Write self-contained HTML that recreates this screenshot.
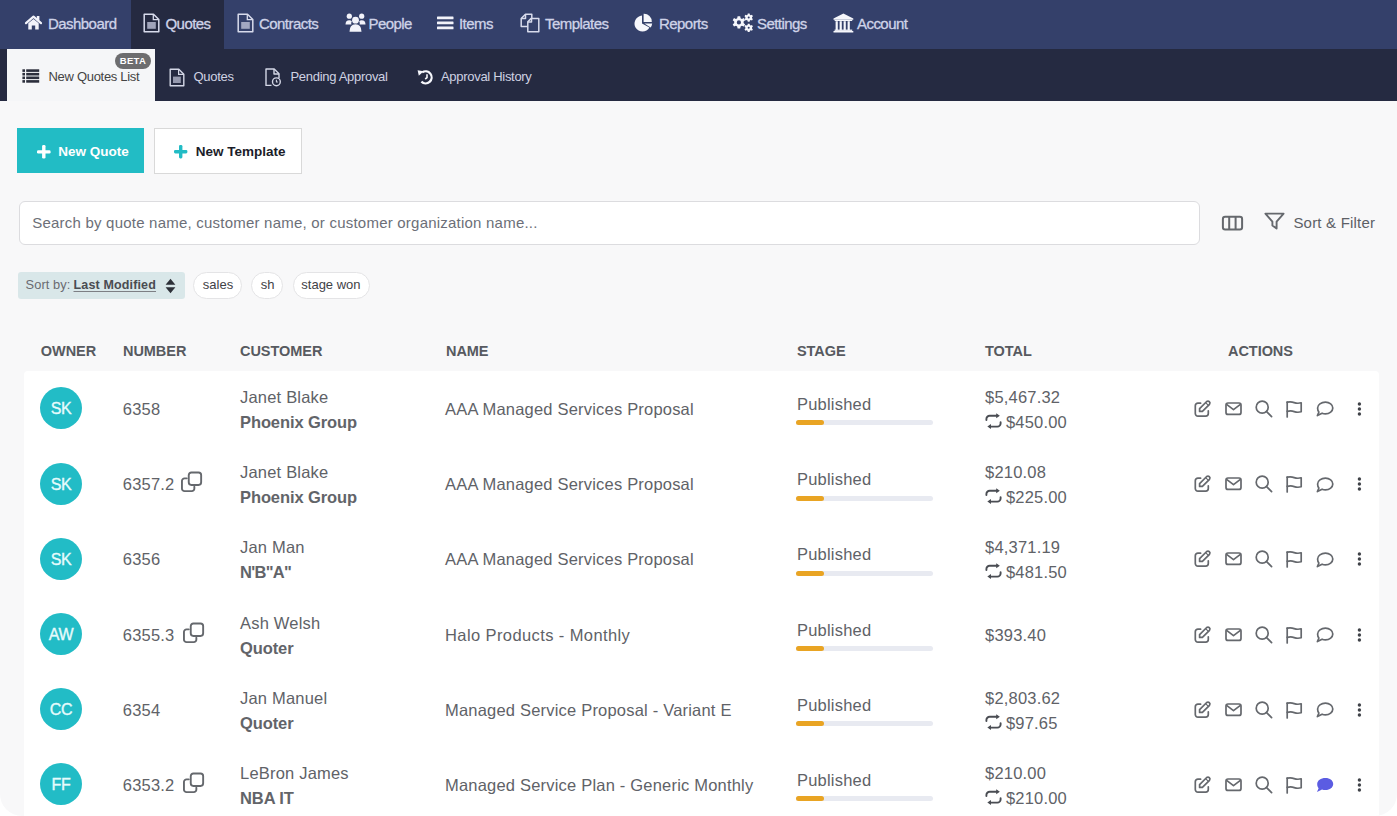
<!DOCTYPE html>
<html><head><meta charset="utf-8">
<style>
*{box-sizing:border-box;margin:0;padding:0}
html,body{width:1397px;height:816px;overflow:hidden;background:#fff}
body{font-family:"Liberation Sans",sans-serif;position:relative}
#page{position:absolute;left:0;top:0;width:1397px;height:816px;background:#f8f8f9;border-radius:0 0 22px 22px;overflow:hidden}
.a{position:absolute;white-space:nowrap}
#topnav{position:absolute;left:0;top:0;width:1397px;height:49px;background:#34406a}
#subnav{position:absolute;left:0;top:49px;width:1397px;height:52px;background:#252a41}
.tn{position:absolute;top:15.9px;height:16px;line-height:16px;font-size:15px;color:#cfd3e8;letter-spacing:-0.55px;-webkit-text-stroke:0.3px #cfd3e8}
.ti{position:absolute;fill:#e6e8f4}
.sn{position:absolute;top:68.5px;height:16px;line-height:16px;font-size:13px;color:#cfd2e2;letter-spacing:-0.3px}
svg{position:absolute;overflow:visible}

.btxt{top:143.5px;height:16px;line-height:16px;font-size:13.5px;font-weight:bold}
.chip{top:277px;height:16px;line-height:16px;font-size:13px}
.th{top:342.7px;height:16px;line-height:16px;font-size:14.5px;font-weight:bold;color:#575a60;letter-spacing:-0.05px}
.td{height:20px;line-height:20px;font-size:16.5px;color:#606267;letter-spacing:0.2px;margin-top:0.5px}
.td.b{font-weight:bold;color:#626469;letter-spacing:-0.1px}
.av{width:42px;height:42px;border-radius:50%;background:#22bcc6;color:#e6fbfc;font-size:16px;line-height:43.5px;text-align:center;letter-spacing:-0.3px;-webkit-text-stroke:0.35px #e6fbfc}
</style></head><body>
<div id="page">
<div id="topnav"></div>
<div class="a" style="left:131px;top:0;width:93px;height:49px;background:#252a41"></div>
<div id="subnav"></div>
<div class="a" style="left:7px;top:49px;width:147.5px;height:52px;background:#f5f6f8"></div>

<!-- top nav items -->
<span class="tn" style="left:48px">Dashboard</span>
<span class="tn" style="left:165.5px">Quotes</span>
<span class="tn" style="left:259px">Contracts</span>
<span class="tn" style="left:368.5px">People</span>
<span class="tn" style="left:459px">Items</span>
<span class="tn" style="left:545px">Templates</span>
<span class="tn" style="left:659px">Reports</span>
<span class="tn" style="left:757px">Settings</span>
<span class="tn" style="left:857px">Account</span>

<!-- top nav icons -->
<svg style="left:25px;top:15px" width="17" height="15" viewBox="0 0 17 15"><path d="M1 8.2L8.5 1.6L16 8.2" fill="none" stroke="#f2f3fa" stroke-width="2.2" stroke-linecap="round" stroke-linejoin="round"/><rect x="11.8" y="1" width="2.6" height="4.5" fill="#f2f3fa"/><path d="M3.3 8.3L8.5 3.9L13.7 8.3V14.6H10.2V10.4H6.8V14.6H3.3Z" fill="#f2f3fa"/></svg>
<svg style="left:143px;top:13px" width="17" height="20" viewBox="0 0 17 20"><path d="M1.2 1.2H10.5L15.8 6.5V18.8H1.2Z" fill="none" stroke="#d8dbec" stroke-width="1.5" stroke-linejoin="round"/><path d="M10.3 1.2V6.7H15.8" fill="none" stroke="#d8dbec" stroke-width="1.3"/><rect x="4.2" y="9" width="8.6" height="6.8" fill="#b6bad0" opacity=".85"/></svg>
<svg style="left:236.5px;top:13px" width="17" height="20" viewBox="0 0 17 20"><path d="M1.2 1.2H10.5L15.8 6.5V18.8H1.2Z" fill="none" stroke="#d8dbec" stroke-width="1.5" stroke-linejoin="round"/><path d="M10.3 1.2V6.7H15.8" fill="none" stroke="#d8dbec" stroke-width="1.3"/><rect x="4.2" y="9" width="8.6" height="6.8" fill="#b6bad0" opacity=".85"/></svg>
<svg style="left:344.5px;top:13px" width="21" height="19" viewBox="0 0 21 19"><g fill="#f2f3fa"><circle cx="4.3" cy="3.2" r="2.6"/><circle cx="16.7" cy="3.2" r="2.6"/><circle cx="10.5" cy="7.2" r="3.4"/><path d="M0.5 11.5Q0.5 7.2 4.3 7.2Q6 7.2 6.8 8.2Q5.8 10 6.4 11.5Z"/><path d="M20.5 11.5Q20.5 7.2 16.7 7.2Q15 7.2 14.2 8.2Q15.2 10 14.6 11.5Z"/><path d="M4.5 18.8Q4.5 11.3 10.5 11.3Q16.5 11.3 16.5 18.8Z"/></g></svg>
<svg style="left:436.5px;top:16px" width="17" height="14" viewBox="0 0 17 14"><g fill="#f2f3fa"><rect x="0" y="0.5" width="16.5" height="2.8" rx=".6"/><rect x="0" y="5.5" width="16.5" height="2.8" rx=".6"/><rect x="0" y="10.5" width="16.5" height="2.8" rx=".6"/></g></svg>
<svg style="left:520px;top:13px" width="21" height="20" viewBox="0 0 21 20"><g fill="none" stroke="#d8dbec" stroke-width="1.5" stroke-linejoin="round"><path d="M7.8 13.5H1.2V5.5L5.5 1.2H11.8V5.2"/><path d="M1.2 5.5H5.5V1.2"/><path d="M7.8 8.8L11.2 5.4H18.8V18.8H7.8Z"/><path d="M7.8 9H11.5V5.4"/></g></svg>
<svg style="left:634px;top:13px" width="19" height="19" viewBox="0 0 19 19"><g fill="#f6f7fc"><path d="M8 2.6A8 8 0 1 0 15.4 14.6L8 10.4Z"/><path d="M9.6 0.8A7.8 7.8 0 0 1 17.8 9H9.6Z"/><path d="M10.4 10.6H18.2A7.8 7.8 0 0 1 16.6 14.6Z"/></g></svg>
<svg style="left:731.5px;top:13px" width="22" height="20" viewBox="0 0 22 20"><g fill="#f6f7fc"><path fill-rule="evenodd" d="M5.6 3.2h2.6l.4 2 1.3.7 1.9-.8 1.3 2.2-1.5 1.3v1.5l1.5 1.3-1.3 2.2-1.9-.8-1.3.7-.4 2H5.6l-.4-2-1.3-.7-1.9.8L.7 11.4l1.5-1.3V8.6L.7 7.3 2 5.1l1.9.8 1.3-.7zM6.9 7.3a2.1 2.1 0 1 0 0 4.2a2.1 2.1 0 1 0 0-4.2z"/><path fill-rule="evenodd" d="M15.8 0.6h1.8l.3 1.2.9.5 1.2-.5.9 1.5-.9.9v1l.9.9-.9 1.5-1.2-.5-.9.5-.3 1.2h-1.8l-.3-1.2-.9-.5-1.2.5-.9-1.5.9-.9v-1l-.9-.9.9-1.5 1.2.5.9-.5zM16.7 3.6a1 1 0 1 0 0 2a1 1 0 1 0 0-2z"/><path fill-rule="evenodd" d="M15.8 10.8h1.8l.3 1.2.9.5 1.2-.5.9 1.5-.9.9v1l.9.9-.9 1.5-1.2-.5-.9.5-.3 1.2h-1.8l-.3-1.2-.9-.5-1.2.5-.9-1.5.9-.9v-1l-.9-.9.9-1.5 1.2.5.9-.5zM16.7 13.8a1 1 0 1 0 0 2a1 1 0 1 0 0-2z"/></g></svg>
<svg style="left:833px;top:13px" width="21" height="20" viewBox="0 0 21 20"><g fill="#f6f7fc"><path d="M10.4 0.6L20.3 5.4V6.8H0.5V5.4Z"/><rect x="1.6" y="6.9" width="17.6" height="1.1"/><rect x="2.6" y="8.2" width="2.2" height="9"/><rect x="6.6" y="8.2" width="2.2" height="9"/><rect x="10.6" y="8.2" width="2.2" height="9"/><rect x="14.6" y="8.2" width="2.2" height="9"/><rect x="1.6" y="16.6" width="17.6" height="1.3"/><rect x="0.5" y="18" width="19.8" height="1.5"/></g></svg>

<!-- sub nav icons -->
<svg style="left:22px;top:69px" width="18" height="14" viewBox="0 0 18 14"><g fill="#2b2e3b"><rect x="0.4" y="0.3" width="2.6" height="2.6"/><rect x="4.2" y="0.3" width="13" height="2.6"/><rect x="0.4" y="3.9" width="2.6" height="2.6"/><rect x="4.2" y="3.9" width="13" height="2.6"/><rect x="0.4" y="7.5" width="2.6" height="2.6"/><rect x="4.2" y="7.5" width="13" height="2.6"/><rect x="0.4" y="11.1" width="2.6" height="2.6"/><rect x="4.2" y="11.1" width="13" height="2.6"/></g></svg>
<svg style="left:169px;top:67.5px" width="17" height="19" viewBox="0 0 17 19"><path d="M1.2 1.2H9.8L14.8 6.2V17.8H1.2Z" fill="none" stroke="#d4d7e6" stroke-width="1.4" stroke-linejoin="round"/><path d="M9.6 1.2V6.4H14.8" fill="none" stroke="#d4d7e6" stroke-width="1.2"/><rect x="4" y="8.6" width="7.8" height="6.4" fill="#a9adc2" opacity=".85"/></svg>
<svg style="left:264.5px;top:67.5px" width="18" height="19" viewBox="0 0 18 19"><g fill="none" stroke="#d4d7e6" stroke-width="1.4" stroke-linejoin="round"><path d="M6.5 17.4H1V1H9.2L14 5.8V10"/><path d="M9 1V6H14"/><circle cx="11.4" cy="13.8" r="3.9"/><path d="M11.4 11.8V14H12.8" stroke-width="1.1"/></g></svg>
<svg style="left:416.5px;top:69px" width="17" height="16" viewBox="0 0 17 16"><g fill="none" stroke="#f6f7fc" stroke-width="2.3"><path d="M5.2 3.4A6 6 0 1 1 4.4 12.6"/><path d="M10 5.2V8.6L8.2 10" stroke-width="1.6"/></g><path d="M0.6 1.2L6.6 2.2L1.8 6.8Z" fill="#f6f7fc"/></svg>

<!-- content -->
<div class="a" style="left:17px;top:128px;width:127px;height:45px;background:#22bcc5"></div>
<svg style="left:37px;top:144.8px" width="14" height="14" viewBox="0 0 14 14" ><g fill="#fff"><rect x="0" y="5.2" width="13.6" height="3.4" rx="1.3"/><rect x="5.1" y="0" width="3.4" height="13.6" rx="1.3"/></g></svg>
<span class="a btxt" style="left:58.3px;color:#fff">New Quote</span>
<div class="a" style="left:154px;top:127.5px;width:148px;height:46px;background:#fff;border:1px solid #d9d9d9"></div>
<svg style="left:174px;top:145px" width="14" height="14" viewBox="0 0 14 14" ><g fill="#22bcc5"><rect x="0" y="5" width="13.4" height="3.4" rx="1.3"/><rect x="5" y="0" width="3.4" height="13.4" rx="1.3"/></g></svg>
<span class="a btxt" style="left:195.7px;color:#1b1d29">New Template</span>
<div class="a" style="left:18.5px;top:201px;width:1181px;height:44px;background:#fff;border:1px solid #dcdcdf;border-radius:6px"></div>
<span class="a" style="left:32.2px;top:214px;height:18px;line-height:18px;font-size:15px;color:#6c6f78;letter-spacing:0.22px">Search by quote name, customer name, or customer organization name...</span>
<svg style="left:1221px;top:215px" width="23" height="16" viewBox="0 0 23 16" ><g fill="none" stroke="#65686d" stroke-width="2"><rect x="1.9" y="1.7" width="19.2" height="12.8" rx="2.2"/><path d="M8.2 1.7V14.5M14.6 1.7V14.5"/></g></svg>
<svg style="left:1264px;top:212px" width="21" height="18" viewBox="0 0 21 18" ><path d="M1.4 1.6H19.6L12.6 9.6V16.6L8.4 13.6V9.6Z" fill="none" stroke="#65686d" stroke-width="1.9" stroke-linejoin="round"/></svg>
<span class="a" style="left:1293.4px;top:213.5px;height:18px;line-height:18px;font-size:15px;color:#5d6066;letter-spacing:0.2px">Sort &amp; Filter</span>
<div class="a" style="left:17.5px;top:272px;width:167px;height:27px;background:#d9e7e9;border-radius:3px"></div>
<span class="a chip" style="left:25.6px;color:#696b71;font-size:12.8px;letter-spacing:0.1px">Sort by:</span>
<span class="a chip" style="left:73.5px;color:#4a4c52;font-size:12.5px;font-weight:bold;letter-spacing:0.15px;text-decoration:underline #7d7f84;text-decoration-thickness:1.2px;text-underline-offset:1.5px">Last Modified</span>
<svg style="left:164.5px;top:277.5px" width="11" height="16" viewBox="0 0 11 16" ><g fill="#2d3038"><path d="M5.5 0.8L10.4 6.8H0.6Z"/><path d="M5.5 15.2L10.4 9.2H0.6Z"/></g></svg>
<div class="a" style="left:193.3px;top:272px;width:48.4px;height:27px;background:#fff;border:1px solid #e4e4e6;border-radius:14px"></div>
<span class="a chip" style="left:202.8px;color:#3f4247">sales</span>
<div class="a" style="left:250.5px;top:272px;width:32.3px;height:27px;background:#fff;border:1px solid #e4e4e6;border-radius:14px"></div>
<span class="a chip" style="left:260.7px;color:#3f4247">sh</span>
<div class="a" style="left:292.8px;top:272px;width:77.2px;height:27px;background:#fff;border:1px solid #e4e4e6;border-radius:14px"></div>
<span class="a chip" style="left:301.3px;color:#3f4247">stage won</span>
<span class="a th" style="left:40.8px">OWNER</span>
<span class="a th" style="left:123px">NUMBER</span>
<span class="a th" style="left:240px">CUSTOMER</span>
<span class="a th" style="left:446px">NAME</span>
<span class="a th" style="left:797px">STAGE</span>
<span class="a th" style="left:985px">TOTAL</span>
<span class="a th" style="left:1228px">ACTIONS</span>
<div class="a" style="left:23.5px;top:371px;width:1355px;height:520px;background:#fff;border-radius:4px"></div>
<div class="a av" style="left:40px;top:387.4px">SK</div>
<span class="a td" style="left:122.8px;top:398.4px">6358</span>
<span class="a td" style="left:240px;top:386.4px">Janet Blake</span>
<span class="a td b" style="left:240px;top:411.4px">Phoenix Group</span>
<span class="a td" style="left:445px;top:398.4px">AAA Managed Services Proposal</span>
<span class="a td" style="left:797px;top:393.4px">Published</span>
<div class="a" style="left:796px;top:420.4px;width:137px;height:5px;border-radius:3px;background:#e8eaf1"></div>
<div class="a" style="left:796px;top:420.4px;width:28px;height:5px;border-radius:3px;background:#e9a423"></div>
<span class="a td" style="left:985px;top:386.4px">$5,467.32</span>
<svg style="left:984.5px;top:412.9px" width="17" height="17" viewBox="0 0 17 17" ><g fill="none" stroke="#4a4d53" stroke-width="1.9" stroke-linecap="round"><path d="M1.4 7V6A3.2 3.2 0 0 1 4.6 2.8H12"/><path d="M15.6 9.2V10.4A3.2 3.2 0 0 1 12.4 13.6H5"/></g><g fill="#4a4d53"><path d="M11.2 0.3L14.9 2.8L11.2 5.3Z"/><path d="M6 11.1L2.3 13.6L6 16.1Z"/></g></svg>
<span class="a td" style="left:1005.9px;top:411.4px">$450.00</span>
<svg style="left:1194px;top:399.9px" width="18" height="18" viewBox="0 0 18 18" ><g fill="none" stroke="#65686d" stroke-width="1.7" stroke-linecap="round" stroke-linejoin="round"><path d="M6.6 3.2H3.9A2.6 2.6 0 0 0 1.3 5.8V13.6A2.6 2.6 0 0 0 3.9 16.2H11.7A2.6 2.6 0 0 0 14.3 13.6V10.8"/><path d="M15.5 4.3A2 2 0 0 0 12.7 1.5L5.6 8.6V11.4H8.4Z"/><path d="M11.6 2.6L14.4 5.4" stroke-width="1.2"/></g></svg>
<svg style="left:1224.5px;top:401.9px" width="18" height="14" viewBox="0 0 18 14" ><g fill="none" stroke="#65686d" stroke-width="1.7" stroke-linejoin="round"><rect x="1" y="1" width="15" height="11.4" rx="2"/><path d="M1.6 2.4L8.5 7.6L15.4 2.4"/></g></svg>
<svg style="left:1255px;top:399.9px" width="18" height="18" viewBox="0 0 18 18" ><g fill="none" stroke="#65686d" stroke-width="1.7" stroke-linecap="round"><circle cx="7.2" cy="7.2" r="6"/><path d="M11.6 11.6L16.6 16.6"/></g></svg>
<svg style="left:1285.5px;top:400.9px" width="17" height="17" viewBox="0 0 17 17" ><g fill="none" stroke="#65686d" stroke-width="1.7" stroke-linecap="round" stroke-linejoin="round"><path d="M1.2 16V1.2"/><path d="M1.2 1.2Q5 0.4 8.2 1.6Q11.6 2.8 15.2 1.8V10.8Q11.6 11.8 8.2 10.6Q5 9.4 1.2 10.4"/></g></svg>
<svg style="left:1315.5px;top:401.4px" width="18" height="16" viewBox="0 0 18 16" ><path d="M9.4 1.2C13.6 1.2 16.8 3.8 16.8 7C16.8 10.2 13.6 12.8 9.4 12.8C8.2 12.8 7.1 12.6 6.1 12.2L1.4 14.6L2.9 11C2 10 1.6 8.6 1.6 7C1.6 3.8 5.2 1.2 9.4 1.2Z" fill="none" stroke="#65686d" stroke-width="1.7" stroke-linejoin="round"/></svg>
<svg style="left:1356.5px;top:401.9px" width="5" height="14" viewBox="0 0 5 14" ><g fill="#3f4248"><circle cx="2.4" cy="2" r="1.7"/><circle cx="2.4" cy="7" r="1.7"/><circle cx="2.4" cy="12" r="1.7"/></g></svg>
<div class="a av" style="left:40px;top:462.6px">SK</div>
<span class="a td" style="left:122.8px;top:473.6px">6357.2</span>
<svg style="left:181.2px;top:471.2px" width="22" height="22" viewBox="0 0 22 22" ><g fill="none" stroke="#65686d" stroke-width="1.9" stroke-linecap="round"><rect x="7.75" y="1.45" width="12.4" height="12.5" rx="2.6"/><path d="M5.8 7.35H3.6A2.6 2.6 0 0 0 0.95 10V17.5A2.6 2.6 0 0 0 3.6 20.15H10.7A2.6 2.6 0 0 0 13.35 17.5V15.8"/></g></svg>
<span class="a td" style="left:240px;top:461.6px">Janet Blake</span>
<span class="a td b" style="left:240px;top:486.6px">Phoenix Group</span>
<span class="a td" style="left:445px;top:473.6px">AAA Managed Services Proposal</span>
<span class="a td" style="left:797px;top:468.6px">Published</span>
<div class="a" style="left:796px;top:495.6px;width:137px;height:5px;border-radius:3px;background:#e8eaf1"></div>
<div class="a" style="left:796px;top:495.6px;width:28px;height:5px;border-radius:3px;background:#e9a423"></div>
<span class="a td" style="left:985px;top:461.6px">$210.08</span>
<svg style="left:984.5px;top:488.1px" width="17" height="17" viewBox="0 0 17 17" ><g fill="none" stroke="#4a4d53" stroke-width="1.9" stroke-linecap="round"><path d="M1.4 7V6A3.2 3.2 0 0 1 4.6 2.8H12"/><path d="M15.6 9.2V10.4A3.2 3.2 0 0 1 12.4 13.6H5"/></g><g fill="#4a4d53"><path d="M11.2 0.3L14.9 2.8L11.2 5.3Z"/><path d="M6 11.1L2.3 13.6L6 16.1Z"/></g></svg>
<span class="a td" style="left:1005.9px;top:486.6px">$225.00</span>
<svg style="left:1194px;top:475.1px" width="18" height="18" viewBox="0 0 18 18" ><g fill="none" stroke="#65686d" stroke-width="1.7" stroke-linecap="round" stroke-linejoin="round"><path d="M6.6 3.2H3.9A2.6 2.6 0 0 0 1.3 5.8V13.6A2.6 2.6 0 0 0 3.9 16.2H11.7A2.6 2.6 0 0 0 14.3 13.6V10.8"/><path d="M15.5 4.3A2 2 0 0 0 12.7 1.5L5.6 8.6V11.4H8.4Z"/><path d="M11.6 2.6L14.4 5.4" stroke-width="1.2"/></g></svg>
<svg style="left:1224.5px;top:477.1px" width="18" height="14" viewBox="0 0 18 14" ><g fill="none" stroke="#65686d" stroke-width="1.7" stroke-linejoin="round"><rect x="1" y="1" width="15" height="11.4" rx="2"/><path d="M1.6 2.4L8.5 7.6L15.4 2.4"/></g></svg>
<svg style="left:1255px;top:475.1px" width="18" height="18" viewBox="0 0 18 18" ><g fill="none" stroke="#65686d" stroke-width="1.7" stroke-linecap="round"><circle cx="7.2" cy="7.2" r="6"/><path d="M11.6 11.6L16.6 16.6"/></g></svg>
<svg style="left:1285.5px;top:476.1px" width="17" height="17" viewBox="0 0 17 17" ><g fill="none" stroke="#65686d" stroke-width="1.7" stroke-linecap="round" stroke-linejoin="round"><path d="M1.2 16V1.2"/><path d="M1.2 1.2Q5 0.4 8.2 1.6Q11.6 2.8 15.2 1.8V10.8Q11.6 11.8 8.2 10.6Q5 9.4 1.2 10.4"/></g></svg>
<svg style="left:1315.5px;top:476.6px" width="18" height="16" viewBox="0 0 18 16" ><path d="M9.4 1.2C13.6 1.2 16.8 3.8 16.8 7C16.8 10.2 13.6 12.8 9.4 12.8C8.2 12.8 7.1 12.6 6.1 12.2L1.4 14.6L2.9 11C2 10 1.6 8.6 1.6 7C1.6 3.8 5.2 1.2 9.4 1.2Z" fill="none" stroke="#65686d" stroke-width="1.7" stroke-linejoin="round"/></svg>
<svg style="left:1356.5px;top:477.1px" width="5" height="14" viewBox="0 0 5 14" ><g fill="#3f4248"><circle cx="2.4" cy="2" r="1.7"/><circle cx="2.4" cy="7" r="1.7"/><circle cx="2.4" cy="12" r="1.7"/></g></svg>
<div class="a av" style="left:40px;top:537.8px">SK</div>
<span class="a td" style="left:122.8px;top:548.8px">6356</span>
<span class="a td" style="left:240px;top:536.8px">Jan Man</span>
<span class="a td b" style="left:240px;top:561.8px;letter-spacing:-0.7px">N&#x27;B&quot;A&quot;</span>
<span class="a td" style="left:445px;top:548.8px">AAA Managed Services Proposal</span>
<span class="a td" style="left:797px;top:543.8px">Published</span>
<div class="a" style="left:796px;top:570.8px;width:137px;height:5px;border-radius:3px;background:#e8eaf1"></div>
<div class="a" style="left:796px;top:570.8px;width:28px;height:5px;border-radius:3px;background:#e9a423"></div>
<span class="a td" style="left:985px;top:536.8px">$4,371.19</span>
<svg style="left:984.5px;top:563.3px" width="17" height="17" viewBox="0 0 17 17" ><g fill="none" stroke="#4a4d53" stroke-width="1.9" stroke-linecap="round"><path d="M1.4 7V6A3.2 3.2 0 0 1 4.6 2.8H12"/><path d="M15.6 9.2V10.4A3.2 3.2 0 0 1 12.4 13.6H5"/></g><g fill="#4a4d53"><path d="M11.2 0.3L14.9 2.8L11.2 5.3Z"/><path d="M6 11.1L2.3 13.6L6 16.1Z"/></g></svg>
<span class="a td" style="left:1005.9px;top:561.8px">$481.50</span>
<svg style="left:1194px;top:550.3px" width="18" height="18" viewBox="0 0 18 18" ><g fill="none" stroke="#65686d" stroke-width="1.7" stroke-linecap="round" stroke-linejoin="round"><path d="M6.6 3.2H3.9A2.6 2.6 0 0 0 1.3 5.8V13.6A2.6 2.6 0 0 0 3.9 16.2H11.7A2.6 2.6 0 0 0 14.3 13.6V10.8"/><path d="M15.5 4.3A2 2 0 0 0 12.7 1.5L5.6 8.6V11.4H8.4Z"/><path d="M11.6 2.6L14.4 5.4" stroke-width="1.2"/></g></svg>
<svg style="left:1224.5px;top:552.3px" width="18" height="14" viewBox="0 0 18 14" ><g fill="none" stroke="#65686d" stroke-width="1.7" stroke-linejoin="round"><rect x="1" y="1" width="15" height="11.4" rx="2"/><path d="M1.6 2.4L8.5 7.6L15.4 2.4"/></g></svg>
<svg style="left:1255px;top:550.3px" width="18" height="18" viewBox="0 0 18 18" ><g fill="none" stroke="#65686d" stroke-width="1.7" stroke-linecap="round"><circle cx="7.2" cy="7.2" r="6"/><path d="M11.6 11.6L16.6 16.6"/></g></svg>
<svg style="left:1285.5px;top:551.3px" width="17" height="17" viewBox="0 0 17 17" ><g fill="none" stroke="#65686d" stroke-width="1.7" stroke-linecap="round" stroke-linejoin="round"><path d="M1.2 16V1.2"/><path d="M1.2 1.2Q5 0.4 8.2 1.6Q11.6 2.8 15.2 1.8V10.8Q11.6 11.8 8.2 10.6Q5 9.4 1.2 10.4"/></g></svg>
<svg style="left:1315.5px;top:551.8px" width="18" height="16" viewBox="0 0 18 16" ><path d="M9.4 1.2C13.6 1.2 16.8 3.8 16.8 7C16.8 10.2 13.6 12.8 9.4 12.8C8.2 12.8 7.1 12.6 6.1 12.2L1.4 14.6L2.9 11C2 10 1.6 8.6 1.6 7C1.6 3.8 5.2 1.2 9.4 1.2Z" fill="none" stroke="#65686d" stroke-width="1.7" stroke-linejoin="round"/></svg>
<svg style="left:1356.5px;top:552.3px" width="5" height="14" viewBox="0 0 5 14" ><g fill="#3f4248"><circle cx="2.4" cy="2" r="1.7"/><circle cx="2.4" cy="7" r="1.7"/><circle cx="2.4" cy="12" r="1.7"/></g></svg>
<div class="a av" style="left:40px;top:613.0px">AW</div>
<span class="a td" style="left:122.8px;top:624.0px">6355.3</span>
<svg style="left:183.4px;top:621.6px" width="22" height="22" viewBox="0 0 22 22" ><g fill="none" stroke="#65686d" stroke-width="1.9" stroke-linecap="round"><rect x="7.75" y="1.45" width="12.4" height="12.5" rx="2.6"/><path d="M5.8 7.35H3.6A2.6 2.6 0 0 0 0.95 10V17.5A2.6 2.6 0 0 0 3.6 20.15H10.7A2.6 2.6 0 0 0 13.35 17.5V15.8"/></g></svg>
<span class="a td" style="left:240px;top:612.0px">Ash Welsh</span>
<span class="a td b" style="left:240px;top:637.0px">Quoter</span>
<span class="a td" style="left:445px;top:624.0px;letter-spacing:0.4px">Halo Products - Monthly</span>
<span class="a td" style="left:797px;top:619.0px">Published</span>
<div class="a" style="left:796px;top:646.0px;width:137px;height:5px;border-radius:3px;background:#e8eaf1"></div>
<div class="a" style="left:796px;top:646.0px;width:28px;height:5px;border-radius:3px;background:#e9a423"></div>
<span class="a td" style="left:985px;top:624.0px">$393.40</span>
<svg style="left:1194px;top:625.5px" width="18" height="18" viewBox="0 0 18 18" ><g fill="none" stroke="#65686d" stroke-width="1.7" stroke-linecap="round" stroke-linejoin="round"><path d="M6.6 3.2H3.9A2.6 2.6 0 0 0 1.3 5.8V13.6A2.6 2.6 0 0 0 3.9 16.2H11.7A2.6 2.6 0 0 0 14.3 13.6V10.8"/><path d="M15.5 4.3A2 2 0 0 0 12.7 1.5L5.6 8.6V11.4H8.4Z"/><path d="M11.6 2.6L14.4 5.4" stroke-width="1.2"/></g></svg>
<svg style="left:1224.5px;top:627.5px" width="18" height="14" viewBox="0 0 18 14" ><g fill="none" stroke="#65686d" stroke-width="1.7" stroke-linejoin="round"><rect x="1" y="1" width="15" height="11.4" rx="2"/><path d="M1.6 2.4L8.5 7.6L15.4 2.4"/></g></svg>
<svg style="left:1255px;top:625.5px" width="18" height="18" viewBox="0 0 18 18" ><g fill="none" stroke="#65686d" stroke-width="1.7" stroke-linecap="round"><circle cx="7.2" cy="7.2" r="6"/><path d="M11.6 11.6L16.6 16.6"/></g></svg>
<svg style="left:1285.5px;top:626.5px" width="17" height="17" viewBox="0 0 17 17" ><g fill="none" stroke="#65686d" stroke-width="1.7" stroke-linecap="round" stroke-linejoin="round"><path d="M1.2 16V1.2"/><path d="M1.2 1.2Q5 0.4 8.2 1.6Q11.6 2.8 15.2 1.8V10.8Q11.6 11.8 8.2 10.6Q5 9.4 1.2 10.4"/></g></svg>
<svg style="left:1315.5px;top:627.0px" width="18" height="16" viewBox="0 0 18 16" ><path d="M9.4 1.2C13.6 1.2 16.8 3.8 16.8 7C16.8 10.2 13.6 12.8 9.4 12.8C8.2 12.8 7.1 12.6 6.1 12.2L1.4 14.6L2.9 11C2 10 1.6 8.6 1.6 7C1.6 3.8 5.2 1.2 9.4 1.2Z" fill="none" stroke="#65686d" stroke-width="1.7" stroke-linejoin="round"/></svg>
<svg style="left:1356.5px;top:627.5px" width="5" height="14" viewBox="0 0 5 14" ><g fill="#3f4248"><circle cx="2.4" cy="2" r="1.7"/><circle cx="2.4" cy="7" r="1.7"/><circle cx="2.4" cy="12" r="1.7"/></g></svg>
<div class="a av" style="left:40px;top:688.2px">CC</div>
<span class="a td" style="left:122.8px;top:699.2px">6354</span>
<span class="a td" style="left:240px;top:687.2px">Jan Manuel</span>
<span class="a td b" style="left:240px;top:712.2px">Quoter</span>
<span class="a td" style="left:445px;top:699.2px">Managed Service Proposal - Variant E</span>
<span class="a td" style="left:797px;top:694.2px">Published</span>
<div class="a" style="left:796px;top:721.2px;width:137px;height:5px;border-radius:3px;background:#e8eaf1"></div>
<div class="a" style="left:796px;top:721.2px;width:28px;height:5px;border-radius:3px;background:#e9a423"></div>
<span class="a td" style="left:985px;top:687.2px">$2,803.62</span>
<svg style="left:984.5px;top:713.7px" width="17" height="17" viewBox="0 0 17 17" ><g fill="none" stroke="#4a4d53" stroke-width="1.9" stroke-linecap="round"><path d="M1.4 7V6A3.2 3.2 0 0 1 4.6 2.8H12"/><path d="M15.6 9.2V10.4A3.2 3.2 0 0 1 12.4 13.6H5"/></g><g fill="#4a4d53"><path d="M11.2 0.3L14.9 2.8L11.2 5.3Z"/><path d="M6 11.1L2.3 13.6L6 16.1Z"/></g></svg>
<span class="a td" style="left:1005.9px;top:712.2px">$97.65</span>
<svg style="left:1194px;top:700.7px" width="18" height="18" viewBox="0 0 18 18" ><g fill="none" stroke="#65686d" stroke-width="1.7" stroke-linecap="round" stroke-linejoin="round"><path d="M6.6 3.2H3.9A2.6 2.6 0 0 0 1.3 5.8V13.6A2.6 2.6 0 0 0 3.9 16.2H11.7A2.6 2.6 0 0 0 14.3 13.6V10.8"/><path d="M15.5 4.3A2 2 0 0 0 12.7 1.5L5.6 8.6V11.4H8.4Z"/><path d="M11.6 2.6L14.4 5.4" stroke-width="1.2"/></g></svg>
<svg style="left:1224.5px;top:702.7px" width="18" height="14" viewBox="0 0 18 14" ><g fill="none" stroke="#65686d" stroke-width="1.7" stroke-linejoin="round"><rect x="1" y="1" width="15" height="11.4" rx="2"/><path d="M1.6 2.4L8.5 7.6L15.4 2.4"/></g></svg>
<svg style="left:1255px;top:700.7px" width="18" height="18" viewBox="0 0 18 18" ><g fill="none" stroke="#65686d" stroke-width="1.7" stroke-linecap="round"><circle cx="7.2" cy="7.2" r="6"/><path d="M11.6 11.6L16.6 16.6"/></g></svg>
<svg style="left:1285.5px;top:701.7px" width="17" height="17" viewBox="0 0 17 17" ><g fill="none" stroke="#65686d" stroke-width="1.7" stroke-linecap="round" stroke-linejoin="round"><path d="M1.2 16V1.2"/><path d="M1.2 1.2Q5 0.4 8.2 1.6Q11.6 2.8 15.2 1.8V10.8Q11.6 11.8 8.2 10.6Q5 9.4 1.2 10.4"/></g></svg>
<svg style="left:1315.5px;top:702.2px" width="18" height="16" viewBox="0 0 18 16" ><path d="M9.4 1.2C13.6 1.2 16.8 3.8 16.8 7C16.8 10.2 13.6 12.8 9.4 12.8C8.2 12.8 7.1 12.6 6.1 12.2L1.4 14.6L2.9 11C2 10 1.6 8.6 1.6 7C1.6 3.8 5.2 1.2 9.4 1.2Z" fill="none" stroke="#65686d" stroke-width="1.7" stroke-linejoin="round"/></svg>
<svg style="left:1356.5px;top:702.7px" width="5" height="14" viewBox="0 0 5 14" ><g fill="#3f4248"><circle cx="2.4" cy="2" r="1.7"/><circle cx="2.4" cy="7" r="1.7"/><circle cx="2.4" cy="12" r="1.7"/></g></svg>
<div class="a av" style="left:40px;top:763.4px">FF</div>
<span class="a td" style="left:122.8px;top:774.4px">6353.2</span>
<svg style="left:183.4px;top:772.0px" width="22" height="22" viewBox="0 0 22 22" ><g fill="none" stroke="#65686d" stroke-width="1.9" stroke-linecap="round"><rect x="7.75" y="1.45" width="12.4" height="12.5" rx="2.6"/><path d="M5.8 7.35H3.6A2.6 2.6 0 0 0 0.95 10V17.5A2.6 2.6 0 0 0 3.6 20.15H10.7A2.6 2.6 0 0 0 13.35 17.5V15.8"/></g></svg>
<span class="a td" style="left:240px;top:762.4px">LeBron James</span>
<span class="a td b" style="left:240px;top:787.4px">NBA IT</span>
<span class="a td" style="left:445px;top:774.4px">Managed Service Plan - Generic Monthly</span>
<span class="a td" style="left:797px;top:769.4px">Published</span>
<div class="a" style="left:796px;top:796.4px;width:137px;height:5px;border-radius:3px;background:#e8eaf1"></div>
<div class="a" style="left:796px;top:796.4px;width:28px;height:5px;border-radius:3px;background:#e9a423"></div>
<span class="a td" style="left:985px;top:762.4px">$210.00</span>
<svg style="left:984.5px;top:788.9px" width="17" height="17" viewBox="0 0 17 17" ><g fill="none" stroke="#4a4d53" stroke-width="1.9" stroke-linecap="round"><path d="M1.4 7V6A3.2 3.2 0 0 1 4.6 2.8H12"/><path d="M15.6 9.2V10.4A3.2 3.2 0 0 1 12.4 13.6H5"/></g><g fill="#4a4d53"><path d="M11.2 0.3L14.9 2.8L11.2 5.3Z"/><path d="M6 11.1L2.3 13.6L6 16.1Z"/></g></svg>
<span class="a td" style="left:1005.9px;top:787.4px">$210.00</span>
<svg style="left:1194px;top:775.9px" width="18" height="18" viewBox="0 0 18 18" ><g fill="none" stroke="#65686d" stroke-width="1.7" stroke-linecap="round" stroke-linejoin="round"><path d="M6.6 3.2H3.9A2.6 2.6 0 0 0 1.3 5.8V13.6A2.6 2.6 0 0 0 3.9 16.2H11.7A2.6 2.6 0 0 0 14.3 13.6V10.8"/><path d="M15.5 4.3A2 2 0 0 0 12.7 1.5L5.6 8.6V11.4H8.4Z"/><path d="M11.6 2.6L14.4 5.4" stroke-width="1.2"/></g></svg>
<svg style="left:1224.5px;top:777.9px" width="18" height="14" viewBox="0 0 18 14" ><g fill="none" stroke="#65686d" stroke-width="1.7" stroke-linejoin="round"><rect x="1" y="1" width="15" height="11.4" rx="2"/><path d="M1.6 2.4L8.5 7.6L15.4 2.4"/></g></svg>
<svg style="left:1255px;top:775.9px" width="18" height="18" viewBox="0 0 18 18" ><g fill="none" stroke="#65686d" stroke-width="1.7" stroke-linecap="round"><circle cx="7.2" cy="7.2" r="6"/><path d="M11.6 11.6L16.6 16.6"/></g></svg>
<svg style="left:1285.5px;top:776.9px" width="17" height="17" viewBox="0 0 17 17" ><g fill="none" stroke="#65686d" stroke-width="1.7" stroke-linecap="round" stroke-linejoin="round"><path d="M1.2 16V1.2"/><path d="M1.2 1.2Q5 0.4 8.2 1.6Q11.6 2.8 15.2 1.8V10.8Q11.6 11.8 8.2 10.6Q5 9.4 1.2 10.4"/></g></svg>
<svg style="left:1315.5px;top:777.4px" width="18" height="16" viewBox="0 0 18 16" ><path d="M9.4 1C14 1 17.2 3.6 17.2 7C17.2 10.4 14 13 9.4 13C8.2 13 7 12.8 6 12.4L1 15L2.6 11.2C1.6 10.1 1.2 8.6 1.2 7C1.2 3.6 4.8 1 9.4 1Z" fill="#5b5ce2"/></svg>
<svg style="left:1356.5px;top:777.9px" width="5" height="14" viewBox="0 0 5 14" ><g fill="#3f4248"><circle cx="2.4" cy="2" r="1.7"/><circle cx="2.4" cy="7" r="1.7"/><circle cx="2.4" cy="12" r="1.7"/></g></svg>

<!-- sub nav -->
<span class="sn" style="left:48.5px;color:#444">New Quotes List</span>
<span class="sn" style="left:193.5px">Quotes</span>
<span class="sn" style="left:290.5px">Pending Approval</span>
<span class="sn" style="left:441px">Approval History</span>
<div class="a" style="left:115px;top:53px;width:36px;height:16px;border-radius:8px;background:#6d6d6f;color:#fff;font-size:9.5px;font-weight:bold;line-height:16px;text-align:center;letter-spacing:0.3px">BETA</div>

</div>
</body></html>
